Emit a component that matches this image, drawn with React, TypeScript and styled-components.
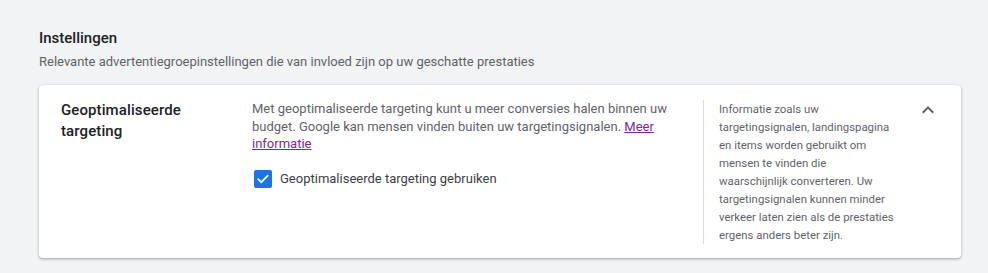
import React from "react";
import styled, { createGlobalStyle } from "styled-components";

const GlobalStyle = createGlobalStyle`
  html, body {
    margin: 0;
    padding: 0;
    background: #f1f3f4;
  }
  body {
    font-family: Roboto, "Liberation Sans", Arial, sans-serif;
    -webkit-font-smoothing: antialiased;
  }
`;

const Page = styled.main`
  padding: 28px 27px 15px 39px;
`;

const SectionHeader = styled.header`
  display: flex;
  flex-direction: column;
  gap: 4px;
  margin-bottom: 13px;
`;

const SectionTitle = styled.h2`
  margin: 0;
  font-size: 15px;
  line-height: 20px;
  font-weight: 500;
  color: #202124;
`;

const SectionSubtitle = styled.p`
  margin: 0;
  font-size: 13px;
  line-height: 20px;
  color: #5f6368;
`;

const Card = styled.section`
  background: #fff;
  border-radius: 4px;
  box-shadow: 0 1px 2px rgba(60, 64, 67, 0.3), 0 1px 3px 1px rgba(60, 64, 67, 0.12);
  padding: 15px 21px 14px 22px;
  display: grid;
  grid-template-columns: 191px 428px 215px 1fr;
  align-items: start;
`;

const SettingTitle = styled.h3`
  margin: 0;
  font-size: 15px;
  line-height: 21px;
  font-weight: 500;
  color: #202124;
  letter-spacing: 0.1px;
`;

const Description = styled.div`
  display: flex;
  flex-direction: column;
  gap: 16px;
`;

const BodyText = styled.p`
  margin: 0;
  font-size: 13px;
  line-height: 17.5px;
  color: #5f6368;
`;

const Link = styled.a`
  color: #7627bb;
  text-decoration: underline;
`;

const CheckRow = styled.label`
  display: flex;
  align-items: center;
  gap: 8px;
  padding-left: 2px;
  font-size: 13px;
  line-height: 20px;
  color: #3c4043;
  cursor: pointer;
`;

const CheckBox = styled.span`
  width: 18px;
  height: 18px;
  border-radius: 2px;
  background: #1a73e8;
  display: inline-flex;
  align-items: center;
  justify-content: center;
  flex: none;
`;

const Aside = styled.aside`
  margin-left: 23px;
  border-left: 1px solid #dadce0;
  padding-left: 15px;
  width: 176px;
  font-size: 11.4px;
  line-height: 18px;
  color: #5f6368;
`;

const ToggleButton = styled.button`
  justify-self: end;
  margin-top: -2px;
  width: 24px;
  height: 24px;
  padding: 0;
  border: none;
  background: transparent;
  color: #5f6368;
  display: flex;
  align-items: center;
  justify-content: center;
  cursor: pointer;
`;

export default function App() {
  return (
    <>
      <GlobalStyle />
      <Page>
        <SectionHeader>
          <SectionTitle>Instellingen</SectionTitle>
          <SectionSubtitle>
            Relevante advertentiegroepinstellingen die van invloed zijn op uw geschatte prestaties
          </SectionSubtitle>
        </SectionHeader>
        <Card>
          <SettingTitle>
            Geoptimaliseerde
            <br />
            targeting
          </SettingTitle>
          <Description>
            <BodyText>
              Met geoptimaliseerde targeting kunt u meer conversies halen binnen uw budget. Google
              kan mensen vinden buiten uw targetingsignalen. <Link href="#">Meer informatie</Link>
            </BodyText>
            <CheckRow>
              <CheckBox>
                <svg width="14" height="14" viewBox="0 0 24 24" fill="none">
                  <path
                    d="M4 12.5l5 5L20 6.5"
                    stroke="#fff"
                    strokeWidth="3"
                    strokeLinecap="square"
                  />
                </svg>
              </CheckBox>
              Geoptimaliseerde targeting gebruiken
            </CheckRow>
          </Description>
          <Aside>
            Informatie zoals uw targetingsignalen, landingspagina en items worden gebruikt om
            mensen te vinden die waarschijnlijk converteren. Uw targetingsignalen kunnen minder
            verkeer laten zien als de prestaties ergens anders beter zijn.
          </Aside>
          <ToggleButton aria-label="Samenvouwen">
            <svg width="24" height="24" viewBox="0 0 24 24" fill="currentColor">
              <path d="M12 8l-6 6 1.41 1.41L12 10.83l4.59 4.58L18 14z" />
            </svg>
          </ToggleButton>
        </Card>
      </Page>
    </>
  );
}
